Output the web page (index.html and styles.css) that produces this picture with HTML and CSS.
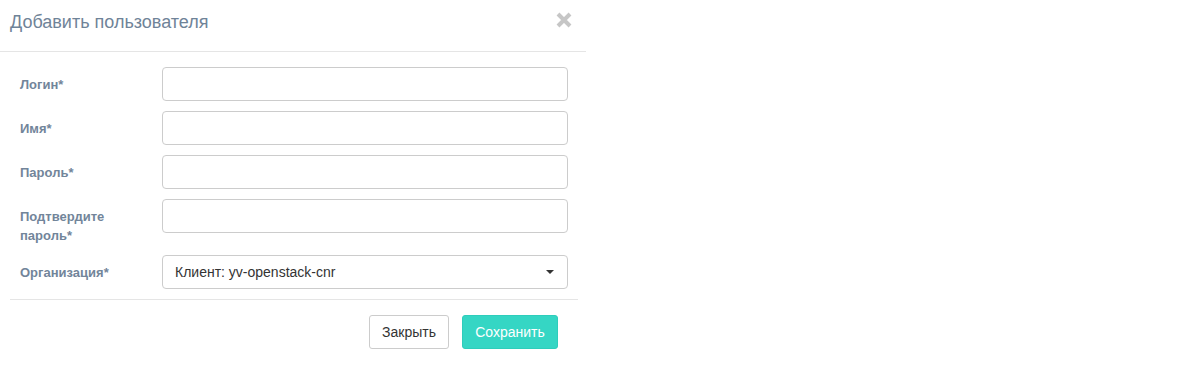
FILE: index.html
```html
<!DOCTYPE html>
<html lang="ru">
<head>
<meta charset="utf-8">
<title>Добавить пользователя</title>
<link rel="stylesheet" href="styles.css">
</head>
<body>
<div class="modal">
  <div class="modal-header">
    <h4 class="modal-title">Добавить пользователя</h4>
    <button class="close" type="button" aria-label="Закрыть">
      <svg width="16" height="16" viewBox="0 0 16 16"><path d="M2 2 L14 14 M14 2 L2 14" stroke="#c6c6c6" stroke-width="4" stroke-linecap="butt" fill="none"/></svg>
    </button>
  </div>
  <div class="modal-body">
    <div class="form-row">
      <label class="form-label">Логин*</label>
      <input class="form-control" type="text">
    </div>
    <div class="form-row">
      <label class="form-label">Имя*</label>
      <input class="form-control" type="text">
    </div>
    <div class="form-row">
      <label class="form-label">Пароль*</label>
      <input class="form-control" type="password">
    </div>
    <div class="form-row">
      <label class="form-label">Подтвердите<br>пароль*</label>
      <input class="form-control" type="password">
    </div>
    <div class="form-row">
      <label class="form-label">Организация*</label>
      <div class="form-control select">
        <span>Клиент: yv-openstack-cnr</span>
        <span class="caret"></span>
      </div>
    </div>
  </div>
  <div class="modal-footer">
    <button class="btn btn-default" type="button">Закрыть</button>
    <button class="btn btn-primary" type="button">Сохранить</button>
  </div>
</div>
</body>
</html>
```
FILE: styles.css
```css
* { box-sizing: border-box; }
html, body { margin: 0; padding: 0; background: #fff; }
body {
  font-family: "Liberation Sans", Arial, sans-serif;
  font-size: 14px;
  color: #333;
}
.modal {
  width: 586px;
}
.modal-header {
  display: flex;
  justify-content: space-between;
  align-items: flex-start;
  height: 52px;
  padding: 12px 14px 0 10px;
  border-bottom: 1px solid #e5e5e5;
}
.modal-title {
  margin: 0;
  font-size: 18px;
  font-weight: normal;
  line-height: 20px;
  color: #6f8398;
}
.close {
  border: 0;
  background: none;
  padding: 0;
  margin-top: 0;
  cursor: pointer;
  line-height: 0;
}
.modal-body {
  padding: 15px 18px 10px 20px;
  display: flex;
  flex-direction: column;
  gap: 10px;
}
.form-row {
  display: grid;
  grid-template-columns: 142px 1fr;
  align-items: start;
}
.form-label {
  font-size: 13px;
  font-weight: bold;
  color: #72859a;
  padding-top: 8px;
  line-height: 19px;
}
.form-control {
  height: 34px;
  width: 100%;
  border: 1px solid #cccccc;
  border-radius: 4px;
  background: #fff;
  padding: 6px 12px;
  font: inherit;
  color: #333;
}
.select {
  display: flex;
  align-items: center;
  justify-content: space-between;
  padding: 0 13px 0 12px;
}
.caret {
  width: 0;
  height: 0;
  border-left: 4px solid transparent;
  border-right: 4px solid transparent;
  border-top: 4px solid #333;
}
.modal-footer {
  margin: 0 8px 0 10px;
  border-top: 1px solid #e5e5e5;
  padding: 15px 20px 18px 0;
  display: flex;
  justify-content: flex-end;
  gap: 13px;
}
.btn {
  height: 34px;
  padding: 6px 12px;
  font: inherit;
  font-size: 14px;
  line-height: 20px;
  border-radius: 3px;
  border: 1px solid #ccc;
  cursor: pointer;
}
.btn-default {
  width: 80px;
  background: #fff;
  color: #333;
}
.btn-primary {
  width: 96px;
  background: #35d6c4;
  border-color: #2ecdbb;
  color: #fff;
}
```
